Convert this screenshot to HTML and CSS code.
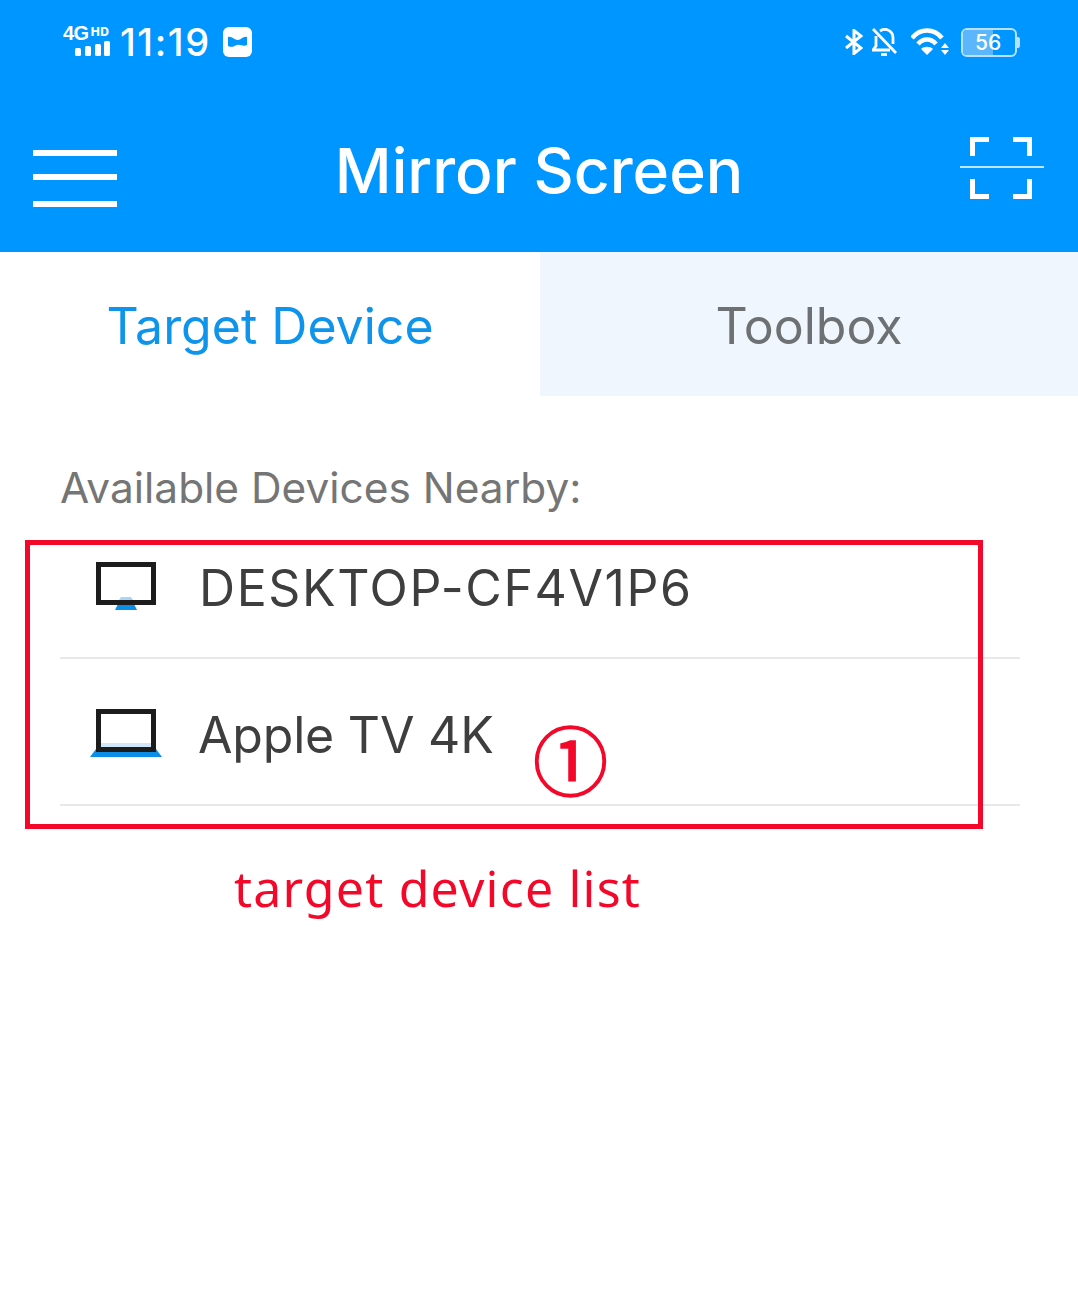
FILE: index.html
```html
<!DOCTYPE html>
<html lang="en">
<head>
    <meta charset="UTF-8">
    <meta name="viewport" content="width=device-width, initial-scale=1.0">
    <title>Mirror Screen</title>
    <link rel="stylesheet" href="styles.css">
</head>
<body>
    <header class="app-header">
        <div class="status-bar">
            <div class="status-left">
                <div class="signal">
                    <div class="signal-text">4G<span class="signal-hd">HD</span></div>
                    <svg class="signal-bars" width="36" height="15" viewBox="0 0 36 15">
                        <rect x="0" y="7" width="6" height="8" rx="1.5"/>
                        <rect x="10" y="5" width="6" height="10" rx="1.5"/>
                        <rect x="20" y="3" width="6" height="12" rx="1.5"/>
                        <rect x="29" y="0" width="6" height="15" rx="1.5"/>
                    </svg>
                </div>
                <span class="clock">11:19</span>
                <svg class="app-badge" width="29" height="30" viewBox="0 0 29 30">
                    <rect width="29" height="30" rx="6" fill="#fff"/>
                    <path d="M5 10 C9 9 11 13 15 13 C18 13 20 9 24 10 V18 C20 20 18 17 14 18 C11 19 9 21 5 19 Z" fill="#0096ff"/>
                </svg>
            </div>
            <div class="status-right">
                <svg class="bt-icon" width="18" height="26" viewBox="0 0 18 26" fill="none" stroke="#fff" stroke-width="3">
                    <path d="M1 7 L16 19 L9 24.5 V1.5 L16 7 L1 19"/>
                </svg>
                <svg class="bell-icon" width="25" height="28" viewBox="0 0 25 28" fill="none" stroke="#fff" stroke-width="2.8">
                    <path d="M4 8 V18 L1 22 H18"/>
                    <path d="M8 3 C14 -1 21 3 21 10 V16"/>
                    <path d="M1 1 L24 25"/>
                    <path d="M9 26.5 H15"/>
                </svg>
                <svg class="wifi-icon" width="39" height="28" viewBox="0 0 39 28" fill="none" stroke="#fff" stroke-width="4.5">
                    <path d="M1 10 C9 0 23 0 31 10"/>
                    <path d="M7 16 C12 10 20 10 25 16"/>
                    <path d="M16 27 L10 21 C13 18 19 18 22 21 Z" fill="#fff" stroke="none"/>
                    <path d="M34 15 L38 20 H30 Z M30 22 H38 L34 27 Z" fill="#fff" stroke="none"/>
                </svg>
                <div class="battery">
                    <div class="battery-body">
                        <div class="battery-fill"></div>
                        <span class="battery-num">56</span>
                    </div>
                    <div class="battery-tip"></div>
                </div>
            </div>
        </div>
        <div class="title-bar">
            <div class="menu-icon"><span></span><span></span><span></span></div>
            <h1>Mirror Screen</h1>
            <svg class="scan-icon" width="84" height="62" viewBox="0 0 84 62" fill="none">
                <path d="M12.5 19 V2.5 H29 M53 2.5 H69.5 V19 M12.5 42 V59.5 H29 M53 59.5 H69.5 V42" stroke="#fff" stroke-width="5"/>
                <path d="M0 30 H84" stroke="#fff" stroke-width="1.6"/>
            </svg>
        </div>
    </header>

    <nav class="tabs">
        <div class="tab active">Target Device</div>
        <div class="tab">Toolbox</div>
    </nav>

    <main class="content">
        <p class="list-title">Available Devices Nearby:</p>
        <div class="device-list">
            <div class="device-row first">
                <div class="device-icon">
                    <svg width="72" height="48" viewBox="0 0 72 48">
                        <path d="M31 35 H41 L43 38 H29 Z" fill="#a9d6f6"/>
                        <path d="M25 48 L29 40 H43 L47 48 Z" fill="#0a8ee8"/>
                        <rect x="8.5" y="2.5" width="55" height="38" fill="none" stroke="#1c1c1c" stroke-width="5"/>
                    </svg>
                </div>
                <span class="device-name spaced">DESKTOP-CF4V1P6</span>
            </div>
            <div class="device-row second">
                <div class="device-icon">
                    <svg width="72" height="48" viewBox="0 0 72 48">
                        <rect x="11" y="34" width="50" height="4" fill="#cfe7f9"/>
                        <path d="M6 40 H66 L72 48 H0 Z" fill="#0a8ee8"/>
                        <rect x="8.5" y="2.5" width="55" height="38" fill="none" stroke="#1c1c1c" stroke-width="5"/>
                    </svg>
                </div>
                <span class="device-name tight">Apple TV 4K</span>
            </div>
        </div>

        <!-- red annotation drawn over the list -->
        <div class="note-box"></div>
        <span class="note-num">①</span>
        <span class="note-text">target device list</span>
    </main>
</body>
</html>
```

FILE: styles.css
```css
html, body { margin: 0; padding: 0; background: #fff; }
body { font-family: "Inter", sans-serif; width: 1078px; height: 1309px; overflow: hidden; }

.app-header { background: #0096ff; height: 252px; color: #fff; }

.status-bar { display: flex; justify-content: space-between; align-items: center; height: 84px; padding: 0 58px 0 63px; }
.status-left { display: flex; align-items: center; }
.status-right { display: flex; align-items: center; }

.signal { width: 48px; margin: 0 9px 5px 0; display: flex; flex-direction: column; align-items: flex-end; }
.signal-text { font-family: "Liberation Sans", sans-serif; font-weight: 700; font-size: 20px; line-height: 15px; letter-spacing: -0.5px; white-space: nowrap; align-self: flex-start; }
.signal-hd { font-family: "Inter", sans-serif; font-weight: 800; font-size: 12px; vertical-align: 4px; letter-spacing: 0.6px; margin-left: 2px; }
.signal-bars { fill: #fff; }
.clock { font-size: 38px; line-height: 44px; margin-right: 12px; letter-spacing: 1.6px; font-weight: 500; }
.app-badge { display: block; }

.bt-icon { margin-right: 9px; }
.bell-icon { margin-right: 14px; }
.wifi-icon { margin-right: 11px; }
.battery { display: flex; align-items: center; }
.battery-body { position: relative; width: 52px; height: 25px; border: 2px solid #b9e1ff; border-radius: 6px; overflow: hidden; }
.battery-fill { width: 30px; height: 100%; background: #5cb6fb; }
.battery-num { position: absolute; top: 0; left: 12px; font-size: 21px; font-weight: 500; line-height: 25px; color: #fff; }
.battery-tip { width: 3px; height: 11px; background: #b9e1ff; border-radius: 0 2px 2px 0; }

.title-bar { display: flex; justify-content: space-between; align-items: center; height: 168px; padding: 0 34px 0 33px; position: relative; }
.title-bar h1 { margin: 0; position: absolute; left: 0; right: 0; top: 49px; text-align: center; font-weight: 500; font-size: 62.3px; line-height: 76px; }
.menu-icon { display: flex; flex-direction: column; gap: 18px; width: 84px; margin-top: 21px; }
.menu-icon span { display: block; height: 6px; background: #fff; }
.menu-icon span:last-child { margin-top: 3px; }
.scan-icon { display: block; }

.tabs { display: flex; height: 144px; }
.tab { flex: 1; display: flex; align-items: center; justify-content: center; padding-top: 4px; box-sizing: border-box; font-size: 50px; background: #eff6fd; color: #6e7173; }
.tab.active { flex: 0 0 540px; background: #fff; color: #0f94ec; }

.content { position: relative; padding: 0 58px 0 60px; }
.list-title { margin: 0; padding-top: 66px; font-size: 42.4px; line-height: 52px; color: #757575; }

.device-list { margin-top: 33px; }
.device-row { display: flex; align-items: center; border-bottom: 2px solid #e8e8e8; padding-left: 30px; box-sizing: border-box; }
.device-row.first { height: 112px; padding-bottom: 32px; }
.device-row.second { height: 147px; padding-top: 3px; }
.device-icon { width: 72px; height: 48px; margin-right: 37px; }
.device-icon svg { display: block; }
.device-name { font-size: 50px; margin-top: 4px; color: #3e3e3e; }
.device-name.spaced { letter-spacing: 1.6px; }
.device-name.tight { letter-spacing: -0.2px; margin-left: -1px; }

.note-box { position: absolute; left: 25px; top: 144px; width: 948px; height: 279px; border: 5px solid #f4082a; }
.note-num { position: absolute; left: 533px; top: 318px; font-family: "Noto Sans CJK SC", sans-serif; font-size: 75px; line-height: 88px; color: #f4082a; -webkit-text-stroke: 1.5px #f4082a; }
.note-text { position: absolute; left: 234px; top: 458px; font-family: "Noto Sans", sans-serif; font-size: 50px; line-height: 68px; color: #f4082a; letter-spacing: 1.2px; }
```
